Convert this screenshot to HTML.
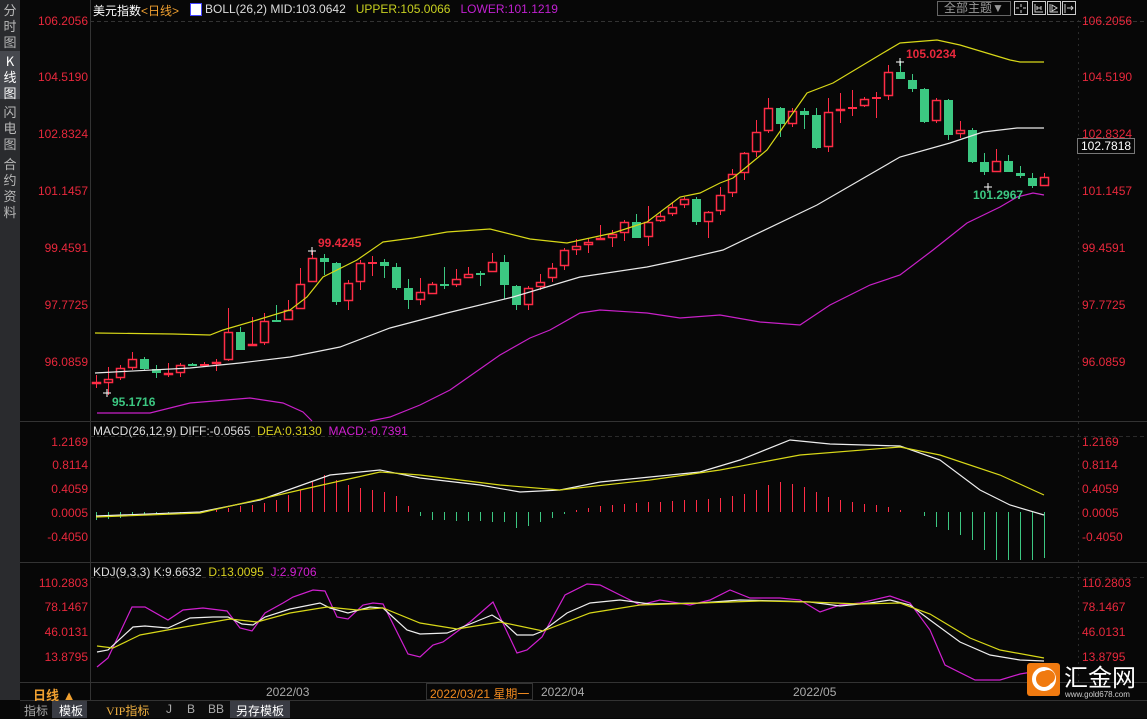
<!DOCTYPE html>
<html><head><meta charset="utf-8">
<style>
*{margin:0;padding:0;box-sizing:border-box}
body{width:1147px;height:718px;background:#070707;overflow:hidden;position:relative;font-family:"Liberation Sans","Noto Sans CJK SC",sans-serif;font-size:12px}
.a{position:absolute;white-space:nowrap}
.side{position:absolute;left:0;top:0;width:20px;height:700px;background:#2a2b2e}
.side div{position:absolute;left:0;width:20px;color:#b8b8b8;font-size:13px;line-height:16px;text-align:center;font-family:"Noto Sans CJK SC",sans-serif}
.r{color:#e8283c}
.lab{position:absolute;left:20px;width:68px;text-align:right;color:#e8283c;font-size:12px}
.rl{position:absolute;left:1082px;color:#e8283c;font-size:12px}
.btn{position:absolute;top:1px;width:14px;height:14px;border:1px solid #aaa}
</style></head><body>
<div class="side">
<div style="top:0;height:48px;padding-top:2px">分<br>时<br>图</div>
<div style="top:51px;height:48px;background:#46484e;color:#fff;padding-top:2px">K<br>线<br>图</div>
<div style="top:102px;height:52px;padding-top:2px">闪<br>电<br>图</div>
<div style="top:156px;height:56px;padding-top:0px">合<br>约<br>资<br>料</div>
</div>
<svg class="a" style="left:0;top:0" width="1147" height="718" id="s">
<line x1="90.5" y1="0" x2="90.5" y2="700" stroke="#333"/>
<line x1="1078.5" y1="20" x2="1078.5" y2="682" stroke="#2a2a2a" stroke-dasharray="2,4"/>
<line x1="90" y1="21.5" x2="1147" y2="21.5" stroke="#333" stroke-dasharray="4,3"/>
<line x1="20" y1="421.5" x2="1147" y2="421.5" stroke="#333"/>
<line x1="20" y1="562.5" x2="1147" y2="562.5" stroke="#333"/>
<line x1="20" y1="682.5" x2="1147" y2="682.5" stroke="#333"/>
<line x1="20" y1="700.5" x2="1147" y2="700.5" stroke="#333"/>
<line x1="90" y1="436.5" x2="1147" y2="436.5" stroke="#2a2a2a" stroke-dasharray="4,3"/>
<line x1="90" y1="577.5" x2="1147" y2="577.5" stroke="#2a2a2a" stroke-dasharray="4,3"/>
<g id="g"></g>
<g stroke="#ccc" fill="none">
<rect x="1014.5" y="1.5" width="13" height="13"/><path d="M1021 4v3M1021 10v3M1016 8h3M1023 8h3"/>
<rect x="1032.5" y="1.5" width="13" height="13"/><path d="M1035 4v8h8M1037 6v4M1041 6v4M1037 8h4"/>
<rect x="1047.5" y="1.5" width="13" height="13"/><path d="M1050 4v8h8M1052 5l5 3-5 3z"/>
<rect x="1062.5" y="1.5" width="13" height="13"/><path d="M1065 4v9M1067 8h6M1071 6l2 2-2 2"/>
</g>
</svg>
<div class="a" style="left:93px;top:2px;color:#fff">美元指数<span style="color:#f0a030">&lt;日线&gt;</span></div>
<div class="a" style="left:190px;top:3px;width:12px;height:13px;background:#fff;border:1px solid #44f"></div>
<div class="a" style="left:205px;top:2px;color:#ddd">BOLL(26,2) MID:103.0642 &nbsp;&nbsp;<span style="color:#c8d020">UPPER:105.0066</span> &nbsp;&nbsp;<span style="color:#c020d0">LOWER:101.1219</span></div>
<div class="a" style="left:937px;top:1px;width:74px;height:15px;border:1px solid #666;color:#999;font-size:12px;line-height:13px;padding-left:6px">全部主题▼</div>
<div class="lab" style="top:14px">106.2056</div>
<div class="lab" style="top:70px">104.5190</div>
<div class="lab" style="top:127px">102.8324</div>
<div class="lab" style="top:184px">101.1457</div>
<div class="lab" style="top:241px">99.4591</div>
<div class="lab" style="top:298px">97.7725</div>
<div class="lab" style="top:355px">96.0859</div>
<div class="lab" style="top:435px">1.2169</div>
<div class="lab" style="top:458px">0.8114</div>
<div class="lab" style="top:482px">0.4059</div>
<div class="lab" style="top:506px">0.0005</div>
<div class="lab" style="top:530px">-0.4050</div>
<div class="lab" style="top:576px">110.2803</div>
<div class="lab" style="top:600px">78.1467</div>
<div class="lab" style="top:625px">46.0131</div>
<div class="lab" style="top:650px">13.8795</div>
<div class="rl" style="top:14px">106.2056</div>
<div class="rl" style="top:70px">104.5190</div>
<div class="rl" style="top:127px">102.8324</div>
<div class="a" style="left:1077px;top:138px;width:58px;height:16px;border:1px solid #777;background:#070707;color:#fff;padding-left:3px;line-height:14px">102.7818</div>
<div class="rl" style="top:184px">101.1457</div>
<div class="rl" style="top:241px">99.4591</div>
<div class="rl" style="top:298px">97.7725</div>
<div class="rl" style="top:355px">96.0859</div>
<div class="rl" style="top:435px">1.2169</div>
<div class="rl" style="top:458px">0.8114</div>
<div class="rl" style="top:482px">0.4059</div>
<div class="rl" style="top:506px">0.0005</div>
<div class="rl" style="top:530px">-0.4050</div>
<div class="rl" style="top:576px">110.2803</div>
<div class="rl" style="top:600px">78.1467</div>
<div class="rl" style="top:625px">46.0131</div>
<div class="rl" style="top:650px">13.8795</div>
<div class="a r" style="left:318px;top:236px;font-weight:bold">99.4245</div>
<div class="a r" style="left:906px;top:47px;font-weight:bold">105.0234</div>
<div class="a" style="left:112px;top:395px;color:#3cc882;font-weight:bold">95.1716</div>
<div class="a" style="left:973px;top:188px;color:#3cc882;font-weight:bold">101.2967</div>
<div class="a" style="left:93px;top:424px;color:#ddd">MACD(26,12,9) DIFF:-0.0565 &nbsp;<span style="color:#d8d020">DEA:0.3130</span> &nbsp;<span style="color:#d020d0">MACD:-0.7391</span></div>
<div class="a" style="left:93px;top:565px;color:#ddd">KDJ(9,3,3) K:9.6632 &nbsp;<span style="color:#d8d020">D:13.0095</span> &nbsp;<span style="color:#d020d0">J:2.9706</span></div>
<div class="a" style="left:33px;top:685px;color:#f0a030;font-weight:bold;font-size:13px">日线 ▲</div>
<div class="a" style="left:266px;top:685px;color:#aaa">2022/03</div>
<div class="a" style="left:426px;top:683px;height:17px;border:1px solid #333;padding:1px 3px;color:#f08a20">2022/03/21 星期一</div>
<div class="a" style="left:541px;top:685px;color:#aaa">2022/04</div>
<div class="a" style="left:793px;top:685px;color:#aaa">2022/05</div>
<div class="a" style="left:20px;top:701px;width:1127px;height:17px;background:#0d0d0d"></div>
<div class="a" style="left:24px;top:702px;color:#aaa">指标</div>
<div class="a" style="left:52px;top:701px;width:35px;height:17px;background:#3a3c44;color:#fff;padding:1px 0 0 7px">模板</div>
<div class="a" style="left:106px;top:702px;color:#f0b040;font-family:'Liberation Serif','Noto Sans CJK SC',serif">VIP指标</div>
<div class="a" style="left:166px;top:702px;color:#aaa">J</div>
<div class="a" style="left:187px;top:702px;color:#aaa">B</div>
<div class="a" style="left:208px;top:702px;color:#aaa">BB</div>
<div class="a" style="left:230px;top:701px;width:60px;height:17px;background:#3a3c44;color:#fff;padding:1px 0 0 6px">另存模板</div>
<div class="a" style="left:1027px;top:663px;width:33px;height:33px;background:#f07a10;border-radius:3px"></div>
<svg class="a" style="left:1027px;top:663px" width="33" height="33"><circle cx="17" cy="16" r="10" fill="none" stroke="#fff" stroke-width="4"/><circle cx="21" cy="14" r="7" fill="#f07a10"/></svg>
<div class="a" style="left:1064px;top:662px;color:#fff;font-size:24px;font-family:'Noto Sans CJK SC',sans-serif;line-height:28px">汇金网</div>
<div class="a" style="left:1065px;top:690px;color:#ccc;font-size:8px">www.gold678.com</div>
<script>
var C=[[384,382,375,388],[383,379,367,395],[378,368,365,380],[368,359,352,370],[359,369,357,370],[369,373,365,378],[375,373,363,377],[373,365,363,377],[364,365,363,366],[365,364,362,366],[364,362,359,371],[360,332,308,361],[332,350,327,350],[346,344,317,346],[343,321,313,345],[320,321,305,322],[320,310,300,320],[309,284,268,309],[282,258,251,282],[258,262,254,275],[263,302,262,305],[301,283,280,310],[282,263,260,290],[263,262,256,276],[262,266,259,278],[267,288,263,290],[288,300,279,309],[300,292,278,305],[294,284,282,294],[284,286,267,289],[285,279,269,287],[278,274,267,278],[273,275,271,286],[272,262,253,272],[262,285,255,299],[286,305,285,310],[305,288,286,310],[287,282,274,290],[278,268,263,282],[266,250,248,270],[250,246,239,255],[245,242,238,253],[240,238,225,240],[238,234,230,247],[233,222,220,241],[222,238,214,238],[237,222,206,246],[221,216,212,222],[214,207,202,216],[205,199,197,208],[199,222,197,225],[222,212,211,238],[211,195,187,215],[193,174,169,197],[173,153,152,180],[152,132,120,157],[131,108,98,133],[108,124,107,137],[124,111,108,127],[111,115,108,129],[115,148,108,149],[147,112,98,152],[111,109,93,123],[108,107,90,116],[106,99,97,107],[98,97,92,118],[96,72,65,100],[72,79,61,79],[80,89,74,92],[89,122,88,123],[121,100,98,123],[100,135,99,140],[134,130,121,138],[130,162,128,163],[162,172,153,175],[172,161,149,172],[161,172,155,172],[173,176,166,178],[178,186,173,188],[186,177,173,186]];
var H=[520,519,518,516,515,514,513,513,512,511,510,508,506,505,503,500,495,490,482,475,480,485,488,490,492,496,506,516,520,520,521,521,521,522,522,528,526,522,518,514,510,508,506,505,504,503,502,502,501,500,500,499,498,496,494,490,485,482,484,487,492,497,500,502,504,505,507,510,512,516,527,530,535,540,550,560,560,560,560,558];
var RED="#ff2c46",GRN="#3cc882",s="";
C.forEach(function(c,i){var x=96+12*i,o=c[0],cl=c[1],up=cl<=o,t=Math.min(o,cl),b=Math.max(o,cl);
var col=up?RED:GRN;
s+='<line x1="'+(x+.5)+'" y1="'+c[2]+'" x2="'+(x+.5)+'" y2="'+c[3]+'" stroke="'+col+'"/>';
if(b-t<2){s+='<rect x="'+(x-4)+'" y="'+t+'" width="9" height="2" fill="'+col+'"/>';}
else if(up)s+='<rect x="'+(x-3.5)+'" y="'+(t+.5)+'" width="8" height="'+(b-t-1)+'" fill="#070707" stroke="'+col+'" stroke-width="1.5"/>';
else s+='<rect x="'+(x-4)+'" y="'+t+'" width="9" height="'+(b-t)+'" fill="'+col+'"/>';
var h=H[i];s+='<line x1="'+(x+.5)+'" y1="512" x2="'+(x+.5)+'" y2="'+h+'" stroke="'+(h<512?RED:GRN)+'"/>';});
function pl(p,c){return '<polyline fill="none" stroke="'+c+'" stroke-width="1.2" points="'+p+'"/>';}
s+=pl("95,333 173,334 210,335 223,330 257,320 290,310 307,297 323,277 357,260 383,242 413,238 447,232 490,229 530,239 567,243 613,233 647,222 680,197 700,193 720,183 733,178 767,150 807,93 833,83 883,53 900,43 937,40 960,45 1010,60 1020,62 1044,62","#d8d818");
s+=pl("95,373 190,368 240,363 290,357 340,347 390,328 447,313 513,297 580,277 647,267 680,260 723,250 817,205 900,157 950,143 983,132 1017,128 1044,128","#e8e8e8");
s+=pl("97,413 150,413 190,403 250,398 283,403 303,412 312,421","#c820c8");
s+=pl("370,421 390,417 420,405 450,390 500,355 530,338 550,330 580,313 600,310 647,313 680,318 720,315 760,322 800,325 830,305 870,285 900,275 933,250 967,223 1000,207 1017,197 1033,193 1044,195","#c820c8");
s+=pl("96,516 200,512 260,500 330,475 380,470 420,478 480,485 520,492 560,490 600,482 700,472 740,460 790,440 830,444 900,446 940,460 980,490 1010,505 1044,515","#eee");
s+=pl("96,517 200,513 300,490 380,472 420,475 500,485 560,490 650,480 720,470 800,455 900,447 940,455 1000,475 1044,495","#d8d818");
s+=pl("97,667 108,658 132,607 145,607 168,620 183,610 203,608 227,611 240,628 252,631 265,613 283,603 293,597 313,590 325,591 337,617 348,619 363,605 373,603 383,604 408,654 420,657 433,645 443,642 470,622 493,602 517,653 527,650 542,637 565,595 587,584 600,585 640,605 660,600 690,605 710,600 730,590 750,598 780,598 800,600 820,612 840,605 860,603 890,596 910,603 930,630 945,665 975,680 1000,680 1020,674 1044,670","#d020d0");
s+=pl("97,652 108,650 133,627 145,626 168,628 190,618 213,617 228,617 242,624 253,625 265,617 290,609 320,603 330,608 348,613 370,607 383,608 407,630 420,634 447,633 470,624 492,615 503,622 517,635 533,635 543,631 567,613 590,603 620,600 650,604 700,603 740,600 780,601 810,602 840,606 870,603 890,600 910,605 930,620 960,642 990,655 1020,660 1044,661","#eee");
s+=pl("97,646 113,648 140,635 173,629 230,619 257,622 290,613 327,607 357,610 383,608 420,623 457,629 500,622 543,631 590,613 640,605 700,603 760,601 810,602 860,604 900,603 930,614 970,638 1000,650 1044,658","#d8d818");
s+='<path d="M103 393h8M107 389v8M308 251h8M312 247v8M896 62h8M900 58v8M984 187h8M988 183v8" stroke="#fff"/>';
document.getElementById("g").innerHTML=s;
</script>
</body></html>
